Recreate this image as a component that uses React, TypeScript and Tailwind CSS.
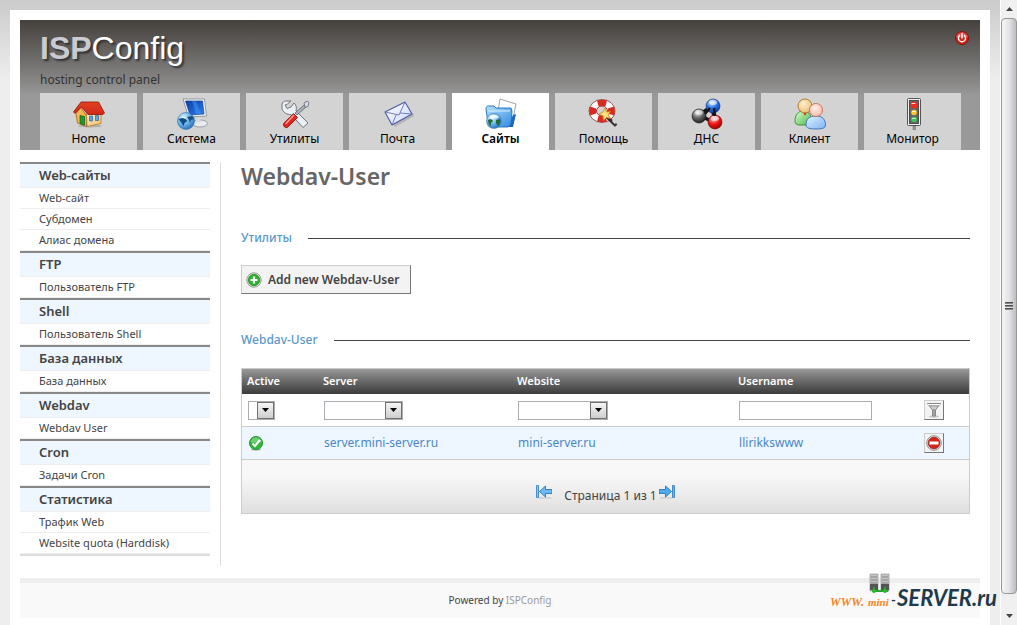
import type { ReactNode } from 'react';

/* ---------- ICONS ---------- */

const HomeIcon = () => (
  <svg width="32" height="32" viewBox="0 0 32 32" aria-hidden="true">
    <defs>
      <linearGradient id="wall" x1="0" y1="0" x2="1" y2="1">
        <stop offset="0" stopColor="#fff4d0" />
        <stop offset="1" stopColor="#f5b95c" />
      </linearGradient>
      <linearGradient id="roof" x1="0" y1="0" x2="0" y2="1">
        <stop offset="0" stopColor="#e2401f" />
        <stop offset="1" stopColor="#d02a1c" />
      </linearGradient>
    </defs>
    <ellipse cx="17" cy="28" rx="12" ry="1.500" fill="#777" opacity=".4" />
    <path d="M3 15.500 7.500 9l6 9v10.500L4.500 25z" fill="#f9b552" stroke="#9b6220" strokeWidth=".8" />
    <path d="M13.500 16H28v9.500L14 28.500z" fill="url(#wall)" stroke="#b9782b" strokeWidth=".8" />
    <path d="M8 4h17.500l6 11-1.500 1.500H15L8.500 9 2 15.500 .5 14z" fill="url(#roof)" stroke="#8c170c" strokeWidth=".8" />
    <path d="M7 17.500l4.500 1V27L7 25.500z" fill="#1f9a2c" stroke="#0c5d16" strokeWidth=".7" />
    <path d="M16.500 18h3v5h-3zM22.500 17.500h3v5h-3z" fill="#5aa7ea" stroke="#27649f" strokeWidth=".7" />
  </svg>
);

const SystemIcon = () => (
  <svg width="32" height="32" viewBox="0 0 32 32" aria-hidden="true">
    <defs>
      <radialGradient id="globe" cx=".35" cy=".3" r=".8">
        <stop offset="0" stopColor="#e6f5ff" />
        <stop offset=".5" stopColor="#6ab4ea" />
        <stop offset="1" stopColor="#1c62ad" />
      </radialGradient>
      <linearGradient id="screen" x1="0" y1="0" x2="1" y2="1">
        <stop offset="0" stopColor="#0b3fae" />
        <stop offset="1" stopColor="#2b7fe8" />
      </linearGradient>
    </defs>
    <ellipse cx="24" cy="25.500" rx="7.500" ry="3.500" fill="#e8ebee" stroke="#8a929b" strokeWidth=".8" />
    <path d="M20 18h4l1 6-5 1z" fill="#d5dae0" />
    <path d="M7 1h21.500l2 17-18 1z" fill="#f3f5f7" stroke="#7e8894" strokeWidth=".8" />
    <path d="M9.500 3h17l1.500 13-14 1z" fill="url(#screen)" stroke="#0a2f86" strokeWidth=".6" />
    <path d="M16 3h4l5 13h-5z" fill="#5cb1ff" opacity=".35" />
    <circle cx="10" cy="23" r="8.500" fill="url(#globe)" stroke="#2d6cae" strokeWidth=".6" />
    <path d="M2.500 21l4-1 3 1 2 2-3 2-1 3-2-3zM11 19l5-1 2 3-3 1-1 3-1-3z" fill="#124f86" />
  </svg>
);

const ToolsIcon = () => (
  <svg width="32" height="32" viewBox="0 0 32 32" aria-hidden="true">
    <path d="M3 6c1-2 2-3 4-3h5L8.500 6 6 7l2 3.500 4-1.500 3-4c2 2 3 4 2 8l12 12-5 4.500-12-13C8 17 4 14 3 11z" fill="#eceff3" stroke="#6f7680" strokeWidth="1" />
    <path d="M29 4l-2 5-9 8-2-2 9-8z" fill="#a9afb8" stroke="#5f6670" strokeWidth=".8" />
    <path d="M25 5l3-2 2 1.500-1 4-3 1z" fill="#d5d9de" stroke="#616872" strokeWidth=".8" />
    <path d="M14.500 15.500l4 4L9 29c-2 2-6-1-4-4z" fill="#dd2720" stroke="#8d100c" strokeWidth=".8" />
    <path d="M14.500 17.500 7 25.500" stroke="#ff9c94" strokeWidth="1.500" strokeLinecap="round" />
  </svg>
);

const MailIcon = () => (
  <svg width="32" height="32" viewBox="0 0 32 32" aria-hidden="true">
    <defs>
      <linearGradient id="paper" x1="0" y1="0" x2="1" y2="1">
        <stop offset="0" stopColor="#fff" />
        <stop offset="1" stopColor="#c9d8fb" />
      </linearGradient>
    </defs>
    <path d="m5 16 8 13L32 18l-1-3z" fill="#777" opacity=".35" />
    <path d="M3 14 23 4l7 12-20 11z" fill="url(#paper)" stroke="#4e59a8" strokeWidth="1.100" strokeLinejoin="round" />
    <path d="m3 14 14 3 6-13M10 27l4-10M30 16l-12-1" fill="none" stroke="#6571b8" strokeWidth=".9" />
  </svg>
);

const SitesIcon = () => (
  <svg width="32" height="32" viewBox="0 0 32 32" aria-hidden="true">
    <defs>
      <linearGradient id="folder" x1="0" y1="0" x2="1" y2="1">
        <stop offset="0" stopColor="#b5e0ff" />
        <stop offset="1" stopColor="#2f8be0" />
      </linearGradient>
    </defs>
    <path d="M15 1l16 5-4 19H11z" fill="#fff" stroke="#999" strokeWidth=".9" />
    <path d="M28 17l3-1-3 13h-5z" fill="#1768c0" />
    <path d="M1 11c0-2 1-3 2-3h6l2 2h15l1 3-1 13-3 3H6c-2 0-3-1-3-3z" fill="url(#folder)" stroke="#1b6dbb" strokeWidth=".9" />
    <path d="M3 13h22" stroke="#dff2ff" strokeWidth="1" />
    <circle cx="9" cy="23" r="7.500" fill="url(#globe)" stroke="#4f8cc0" strokeWidth=".7" />
    <path d="M3 22c2-1 4-1 5 1l-2 2v3c-2-1-3-3-3-6zM11 22l4-1c1 2 0 5-2 7l-2-3z" fill="#226c3a" />
    <path d="M4 19c2-3 8-3 10 0-3 2-7 2-10 0z" fill="#fff" opacity=".8" />
  </svg>
);

const HelpIcon = () => (
  <svg width="32" height="32" viewBox="0 0 32 32" aria-hidden="true">
    <ellipse cx="14" cy="13" rx="13" ry="11.500" fill="#fafafa" stroke="#8a4a46" strokeWidth=".9" />
    <path d="M9 2.500c3-1 7-1 10 0L17.500 8h-7zM2 8.500c-1 3-1 6 0 9l6-2v-5zM26 8.500c1 3 1 6 0 9l-6-2v-5zM9 23.500c3 1 7 1 10 0L17.500 18h-7z" fill="#d62a22" />
    <ellipse cx="14" cy="13" rx="5.500" ry="5" fill="#d3d3d3" stroke="#a33" strokeWidth="1" />
    <path d="m19 17 10 9.500-2 2L17 19z" fill="#333" stroke="#111" strokeWidth=".5" />
    <path d="m24.500 22.500 3 3" stroke="#eee" strokeWidth="1.500" />
    <path d="m17 10 1.500 4 4-.5-2.500 3.500 2.500 3.500-4-1-3 3-.5-4.500-4-2 4-2z" fill="#ffe27a" stroke="#e27b17" strokeWidth=".8" />
  </svg>
);

const DnsIcon = () => (
  <svg width="32" height="32" viewBox="0 0 32 32" aria-hidden="true">
    <defs>
      <radialGradient id="ballBlue" cx=".4" cy=".25" r=".8">
        <stop offset="0" stopColor="#d5ebff" />
        <stop offset=".5" stopColor="#2a74e8" />
        <stop offset="1" stopColor="#07379b" />
      </radialGradient>
      <radialGradient id="ballRed" cx=".4" cy=".25" r=".8">
        <stop offset="0" stopColor="#ffd8d8" />
        <stop offset=".5" stopColor="#ef1717" />
        <stop offset="1" stopColor="#8d0000" />
      </radialGradient>
      <radialGradient id="ballGray" cx=".4" cy=".25" r=".8">
        <stop offset="0" stopColor="#eee" />
        <stop offset=".5" stopColor="#666" />
        <stop offset="1" stopColor="#181818" />
      </radialGradient>
    </defs>
    <path d="M21 8 8 17l16 8z" fill="none" stroke="#151515" strokeWidth="3.500" />
    <circle cx="22" cy="8" r="7" fill="url(#ballBlue)" stroke="#0b2c76" strokeWidth=".6" />
    <circle cx="8" cy="18" r="7" fill="url(#ballGray)" stroke="#111" strokeWidth=".6" />
    <circle cx="24" cy="24" r="7" fill="url(#ballRed)" stroke="#6c0000" strokeWidth=".6" />
    <path d="m19 10-5 6M23 10l1 8" stroke="#151515" strokeWidth="2.500" />
    <ellipse cx="22" cy="4.500" rx="4" ry="2.500" fill="#fff" opacity=".6" />
    <ellipse cx="8" cy="14.500" rx="4" ry="2.500" fill="#fff" opacity=".5" />
    <ellipse cx="24" cy="20.500" rx="4" ry="2.500" fill="#fff" opacity=".6" />
  </svg>
);

const ClientIcon = () => (
  <svg width="32" height="32" viewBox="0 0 32 32" aria-hidden="true">
    <defs>
      <linearGradient id="bodyGreen" x1="0" y1="0" x2="1" y2="1">
        <stop offset="0" stopColor="#d8ffcf" />
        <stop offset="1" stopColor="#4fb74a" />
      </linearGradient>
      <linearGradient id="bodyBlue" x1="0" y1="0" x2="1" y2="1">
        <stop offset="0" stopColor="#e1f0ff" />
        <stop offset="1" stopColor="#7fb4f4" />
      </linearGradient>
      <radialGradient id="faceTan" cx=".4" cy=".35" r=".7">
        <stop offset="0" stopColor="#fff1d0" />
        <stop offset="1" stopColor="#ecbb70" />
      </radialGradient>
      <radialGradient id="facePink" cx=".4" cy=".35" r=".7">
        <stop offset="0" stopColor="#fff0ea" />
        <stop offset="1" stopColor="#f8bba9" />
      </radialGradient>
    </defs>
    <path d="M1 23c0-6 3-10 8-10s8 3 8 8v6H6c-3 0-5-1-5-4z" fill="url(#bodyGreen)" stroke="#378a34" strokeWidth=".9" />
    <path d="M9 14h4l-2 4z" fill="#d22" />
    <circle cx="11" cy="8" r="7" fill="url(#faceTan)" stroke="#a9732a" strokeWidth=".9" />
    <path d="M12 27c0-6 3-9 10-9s9.500 4 9.500 9c0 3-3 4-9.500 4s-10-1-10-4z" fill="url(#bodyBlue)" stroke="#346fb9" strokeWidth=".9" />
    <circle cx="22" cy="12" r="6.500" fill="url(#facePink)" stroke="#c66a54" strokeWidth=".9" />
  </svg>
);

const MonitorIcon = () => (
  <svg width="32" height="32" viewBox="0 0 32 32" aria-hidden="true">
    <path d="M16 28h2.500v4H16z" fill="#999" stroke="#666" strokeWidth=".5" />
    <rect x="10.500" y=".5" width="13" height="27" rx="1" fill="#f1f1f1" stroke="#555" />
    <rect x="12.500" y="2.500" width="9" height="23" fill="#666" stroke="#333" strokeWidth=".8" />
    <circle cx="17" cy="7" r="3.500" fill="#ee2a20" />
    <circle cx="17" cy="14.500" r="2.800" fill="#ffc928" />
    <circle cx="17" cy="21.500" r="2.800" fill="#34c552" />
    <path d="M15 5.500h3M15.500 13.500h3M15.500 20.500h3" stroke="#fff" strokeWidth="1.200" strokeLinecap="round" opacity=".8" />
  </svg>
);

const PowerIcon = () => (
  <svg width="16" height="16" viewBox="0 0 16 16" aria-hidden="true">
    <circle cx="8" cy="8" r="6.500" fill="#d3211b" stroke="#8f0f0b" />
    <path d="M2 7c1-6 11-6 12 0-4 1-8 1-12 0z" fill="#fff" opacity=".25" />
    <path d="M5.500 5.500a3.600 3.600 0 1 0 5 0M8 3.500V8" fill="none" stroke="#fff" strokeWidth="1.400" strokeLinecap="round" />
  </svg>
);

const AddIcon = () => (
  <svg width="16" height="16" viewBox="0 0 16 16" aria-hidden="true">
    <circle cx="8" cy="8" r="7.200" fill="#e8e8e8" stroke="#9a9a9a" />
    <circle cx="8" cy="8" r="5.700" fill="#2cb52c" stroke="#15801a" strokeWidth=".7" />
    <path d="M8 4.500v7M4.500 8h7" stroke="#fff" strokeWidth="2.200" />
  </svg>
);

const OkIcon = () => (
  <svg width="16" height="16" viewBox="0 0 16 16" aria-hidden="true">
    <ellipse cx="8" cy="14.500" rx="5" ry="1.200" fill="#777" opacity=".5" />
    <circle cx="8" cy="8" r="6.600" fill="#33b53a" stroke="#1d8a28" strokeWidth=".8" />
    <path d="M2.500 7c1-6 10-6 11 0-4 1.500-7 1.500-11 0z" fill="#fff" opacity=".3" />
    <path d="m4.500 8.500 2.500 2.500 5-6" fill="none" stroke="#fff" strokeWidth="2" />
  </svg>
);

const FilterIcon = () => (
  <svg width="16" height="16" viewBox="0 0 16 16" aria-hidden="true">
    <ellipse cx="8" cy="14.500" rx="5" ry="1" fill="#999" opacity=".5" />
    <path d="M1.500 1.500h13L9.500 8v6h-3V8z" fill="#ccc" stroke="#888" />
    <path d="M2 2.500h12" stroke="#fff" />
    <path d="M3.500 4h9" stroke="#999" />
    <path d="M8 7v6.500" stroke="#777" />
  </svg>
);

const DeleteIcon = () => (
  <svg width="16" height="16" viewBox="0 0 16 16" aria-hidden="true">
    <circle cx="8" cy="8" r="7.300" fill="#e3e3e3" stroke="#929292" />
    <circle cx="8" cy="8" r="5.800" fill="#d3261e" stroke="#96120c" strokeWidth=".7" />
    <path d="M3.500 6.500h9v3h-9z" fill="#fff" />
  </svg>
);

const FirstPageIcon = () => (
  <svg width="16" height="16" viewBox="0 0 16 16" aria-hidden="true">
    <path d="M3 14h12" stroke="#999" opacity=".5" />
    <path d="M.5 1.500h2v12h-2z" fill="#8cc8f7" stroke="#2878bd" strokeWidth=".8" />
    <path d="m3.500 7.500 6-5.500v3.500H16v4H9.500V13z" fill="#6dbaf3" stroke="#2878bd" strokeWidth=".9" />
  </svg>
);

const LastPageIcon = () => (
  <svg width="16" height="16" viewBox="0 0 16 16" aria-hidden="true">
    <path d="M1 14h12" stroke="#999" opacity=".5" />
    <path d="M13.500 1.500h2v12h-2z" fill="#6db4ee" stroke="#2878bd" strokeWidth=".8" />
    <path d="m12.500 7.500-6-5.500v3.500H0v4h6.500V13z" fill="#4fa9ee" stroke="#2878bd" strokeWidth=".9" />
  </svg>
);

/* ---------- DATA ---------- */

const modules: { label: string; icon: ReactNode; active?: boolean }[] = [
  { label: 'Home', icon: <HomeIcon /> },
  { label: 'Система', icon: <SystemIcon /> },
  { label: 'Утилиты', icon: <ToolsIcon /> },
  { label: 'Почта', icon: <MailIcon /> },
  { label: 'Сайты', icon: <SitesIcon />, active: true },
  { label: 'Помощь', icon: <HelpIcon /> },
  { label: 'ДНС', icon: <DnsIcon /> },
  { label: 'Клиент', icon: <ClientIcon /> },
  { label: 'Монитор', icon: <MonitorIcon /> },
];

const menu = [
  { title: 'Web-сайты', items: ['Web-сайт', 'Субдомен', 'Алиас домена'] },
  { title: 'FTP', items: ['Пользователь FTP'] },
  { title: 'Shell', items: ['Пользователь Shell'] },
  { title: 'База данных', items: ['База данных'] },
  { title: 'Webdav', items: ['Webdav User'] },
  { title: 'Cron', items: ['Задачи Cron'] },
  { title: 'Статистика', items: ['Трафик Web', 'Website quota (Harddisk)'] },
];

const users = [{ id: 1, server: 'server.mini-server.ru', website: 'mini-server.ru', username: 'llirikkswww' }];

/* ---------- PARTS ---------- */

function FilterSelect({ label, className }: { label: string; className: string }) {
  return (
    <div className={`relative h-[19px] ${className}`}>
      <select aria-label={label} className="block h-full w-full appearance-none border border-[#abadb3] bg-white">
        <option value=""></option>
      </select>
      <span className="pointer-events-none absolute inset-y-px right-px flex w-[17px] items-center justify-center border border-[#707070] bg-linear-to-b from-[#f4f4f4] to-[#cfcfcf]">
        <svg width="7" height="4" viewBox="0 0 7 4"><path d="M0 0h7L3.500 4z" fill="#000" /></svg>
      </span>
    </div>
  );
}

function Legend({ children }: { children: ReactNode }) {
  return (
    <h2 className="flex items-center gap-4 text-[12px] leading-4 font-medium text-[#5a98cc]">
      {children}
      <span className="h-px flex-1 bg-[#444]" />
    </h2>
  );
}

function Scrollbar() {
  return (
    <div className="flex w-[17px] shrink-0 flex-col border-l border-white bg-[#f0f0f0]">
      <div className="flex h-[18px] items-center justify-center">
        <svg width="7" height="4" viewBox="0 0 7 4"><path d="M0 4h7L3.500 0z" fill="#444" /></svg>
      </div>
      <div className="flex flex-1 flex-col items-center justify-center gap-px rounded-sm border border-[#979797] bg-linear-to-r from-[#f5f5f5] via-[#e4e4e6] to-[#bcbcc2]">
        <span className="h-0.5 w-2 bg-linear-to-b from-[#333] to-[#aaa]" />
        <span className="h-0.5 w-2 bg-linear-to-b from-[#333] to-[#aaa]" />
        <span className="h-0.5 w-2 bg-linear-to-b from-[#333] to-[#aaa]" />
      </div>
      <div className="flex h-[31px] items-center justify-center pt-3">
        <svg width="7" height="4" viewBox="0 0 7 4"><path d="M0 0h7L3.500 4z" fill="#444" /></svg>
      </div>
    </div>
  );
}

function Watermark() {
  return (
    <svg className="pointer-events-none absolute right-0 bottom-0" width="172" height="54" viewBox="0 0 172 54" role="img" aria-label="www.mini-SERVER.ru">
      {/* SERVER TOWERS */}
      <g>
        <path d="M42 3h8v17h-8zM53 3h8v17h-8z" fill="#c4c4c4" stroke="#888" strokeWidth=".6" />
        <path d="M43 6h6M43 9h6M43 12h6M54 6h6M54 9h6M54 12h6" stroke="#888" />
        <path d="M42 13h8v6h-8zM53 13h8v6h-8z" fill="#555" />
        <path d="M44 20h16M46 16v5M57 16v5" stroke="#2a2" strokeWidth="2" />
        <circle cx="46" cy="20" r="2" fill="#2cb83c" />
        <circle cx="57" cy="20" r="2" fill="#2cb83c" />
      </g>
      <text x="2" y="35" fill="#f5871f" fontFamily="Liberation Serif, serif" fontStyle="italic" fontWeight="bold" fontSize="12">WWW.</text>
      <text x="40" y="35" fill="#f5871f" fontFamily="Liberation Serif, serif" fontStyle="italic" fontWeight="bold" fontSize="11">mini</text>
      <text x="63" y="34" fill="#1e3a4c" fontFamily="Lato, sans-serif" fontWeight="bold" fontSize="13">-</text>
      <text x="69" y="35" fill="#1e3a4c" fontFamily="Lato, sans-serif" fontStyle="italic" fontWeight="bold" fontSize="22">SERVER.ru</text>
    </svg>
  );
}

export default function App() {
  return (
    <div className="flex min-h-screen font-['Noto_Sans','Open_Sans',sans-serif] text-[11px] text-[#444]">
      <div className="relative flex flex-1 bg-[#eee] bg-linear-to-b from-[#cbcbcb] to-[#eee] to-[80px] p-2.5 pb-0">
        <div className="flex-1 bg-white p-2.5 pb-0">

          {/* HEADER */}
          <header className="bg-[#999] bg-linear-to-b from-[#45413d] to-[#999] to-[76px] pr-2.5 pl-5">
            <div className="flex h-[73px] items-start justify-between pt-2.5">
              <div>
                <div className="font-['Liberation_Sans',Arial,sans-serif] text-[32px] leading-9 text-white [text-shadow:2px_2px_2px_#333]">
                  <span className="font-bold text-[#c9cbd0]">ISP</span>Config
                </div>
                <p className="mt-1.5 text-[12px] leading-4 text-[#333]">hosting control panel</p>
              </div>
              <button type="button" aria-label="Logout">
                <PowerIcon />
              </button>
            </div>
            <nav className="flex gap-1.5">
              {modules.map(m => (
                <a
                  key={m.label}
                  href="#"
                  className={`flex h-[57px] w-[97px] flex-col items-center gap-px pt-[5px] text-[12px] leading-4 text-black ${m.active ? 'bg-white font-semibold' : 'bg-[#d3d3d3]'}`}
                >
                  {m.icon}
                  <span>{m.label}</span>
                </a>
              ))}
            </nav>
          </header>

          <div className="flex pt-3">
            {/* SIDEBAR */}
            <aside className="w-[190px] shrink-0">
              {menu.map(section => (
                <section key={section.title} className="border-t-2 border-[#888]">
                  <h3 className="border-b border-[#eee] bg-[#eef7ff] pl-[19px] text-[13px] leading-[23px] font-semibold">{section.title}</h3>
                  <ul>
                    {section.items.map(item => (
                      <li key={item} className="border-b border-[#eee]">
                        <a href="#" className="block pl-[19px] leading-5">{item}</a>
                      </li>
                    ))}
                  </ul>
                </section>
              ))}
              <div className="h-0.5 bg-[#ddd]" />
            </aside>

            {/* CONTENT */}
            <main className="ml-2.5 min-h-[404px] flex-1 border-l border-[#ddd] pr-2.5 pl-5">
              <h1 className="text-[23px] leading-7 font-semibold text-[#666]">Webdav-User</h1>

              <div className="mt-10">
                <Legend>Утилиты</Legend>
                <button
                  type="button"
                  className="mt-[19px] flex h-[29px] items-center gap-1.5 border border-t-[#ccc] border-r-[#777] border-b-[#777] border-l-[#ccc] bg-[#f3f3f3] pr-2.5 pl-1 text-[12px] font-semibold text-[#444]"
                >
                  <AddIcon />
                  Add new Webdav-User
                </button>
              </div>

              <div className="mt-[38px]">
                <Legend>Webdav-User</Legend>
                <table className="mt-5 w-full table-fixed border-separate border-spacing-0 border border-[#ccc]">
                  <colgroup>
                    <col className="w-[76px]" />
                    <col className="w-[26.7%]" />
                    <col className="w-[30.4%]" />
                    <col />
                    <col className="w-[51px]" />
                  </colgroup>
                  <thead>
                    <tr className="h-[25px] bg-linear-to-b from-[#999] to-[#3c3c3c] text-left text-white">
                      <th className="px-[5px] py-0 font-semibold">Active</th>
                      <th className="px-[5px] py-0 font-semibold">Server</th>
                      <th className="px-[5px] py-0 font-semibold">Website</th>
                      <th className="px-[5px] py-0 font-semibold">Username</th>
                      <th className="px-[5px] py-0"></th>
                    </tr>
                    <tr className="h-[33px] bg-white">
                      <td className="border-b border-[#ccc] px-1.5"><FilterSelect label="Active" className="w-[27px]" /></td>
                      <td className="border-b border-[#ccc] px-1.5"><FilterSelect label="Server" className="w-[79px]" /></td>
                      <td className="border-b border-[#ccc] px-1.5"><FilterSelect label="Website" className="w-[90px]" /></td>
                      <td className="border-b border-[#ccc] px-1.5">
                        <input type="text" aria-label="Username" className="block h-[19px] w-[133px] border border-[#abadb3] bg-white px-1" />
                      </td>
                      <td className="border-b border-[#ccc] px-1.5">
                        <button type="button" aria-label="Filter" className="flex size-5 items-center justify-center border border-t-[#ccc] border-r-[#777] border-b-[#777] border-l-[#ccc] bg-[#f3f3f3]">
                          <FilterIcon />
                        </button>
                      </td>
                    </tr>
                  </thead>
                  <tbody>
                    {users.map(u => (
                      <tr key={u.id} className="h-[33px] bg-[#eef7ff] text-[12px] text-[#4a86c8]">
                        <td className="border-b border-[#ccc] px-1.5"><OkIcon /></td>
                        <td className="border-b border-[#ccc] px-1.5"><a href="#">{u.server}</a></td>
                        <td className="border-b border-[#ccc] px-1.5"><a href="#">{u.website}</a></td>
                        <td className="border-b border-[#ccc] px-1.5"><a href="#">{u.username}</a></td>
                        <td className="border-b border-[#ccc] px-1.5">
                          <button type="button" aria-label="Delete" className="flex size-5 items-center justify-center border border-t-[#ccc] border-r-[#777] border-b-[#777] border-l-[#ccc] bg-[#f3f3f3]">
                            <DeleteIcon />
                          </button>
                        </td>
                      </tr>
                    ))}
                  </tbody>
                  <tfoot className="bg-[#f7f7f7] bg-linear-to-b from-[#f8f8f8] from-30% to-[#dfdfdf]">
                    <tr className="h-[53px]">
                      <td colSpan={5} className="pt-[18px]">
                        <div className="flex items-start justify-center text-[12px] leading-6">
                          <button type="button" aria-label="First page" className="mr-3"><FirstPageIcon /></button>
                          <span>Страница 1 из 1</span>
                          <button type="button" aria-label="Last page" className="ml-0.5"><LastPageIcon /></button>
                        </div>
                      </td>
                    </tr>
                  </tfoot>
                </table>
              </div>
            </main>
          </div>

          {/* FOOTER */}
          <footer className="mt-3 h-10 border-t-[5px] border-[#eee] bg-[#f9f9f9] text-center text-[10px] leading-[35px]">
            Powered by <a href="#" className="text-[#999]">ISPConfig</a>
          </footer>
        </div>
        <Watermark />
      </div>
      <Scrollbar />
    </div>
  );
}
